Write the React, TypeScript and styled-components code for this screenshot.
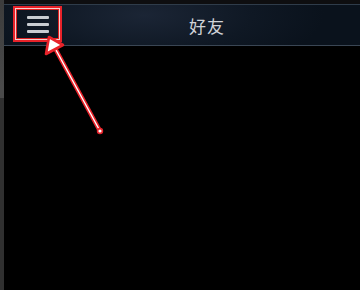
import React from "react";
import styled, { createGlobalStyle } from "styled-components";

const Global = createGlobalStyle`
  html, body { margin: 0; padding: 0; background: #000; }
  body { font-family: "Noto Sans CJK SC", "Noto Sans", sans-serif; }
`;

const Page = styled.div`
  position: relative;
  width: 360px;
  height: 290px;
  display: flex;
  overflow: hidden;
  background: #000;
`;

const SideStrip = styled.div`
  width: 4px;
  flex: none;
  background: linear-gradient(#3c3c3c 0, #4a4a4a 30%, #4a4a4a 98px, #303030 98px, #303030 100%);
`;

const Main = styled.div`
  flex: 1;
  display: flex;
  flex-direction: column;
`;

const TopStrip = styled.div`
  height: 4px;
  background: #0e0e10;
`;

const Header = styled.div`
  height: 40px;
  display: flex;
  align-items: center;
  position: relative;
  border-top: 1px solid #2f3c4a;
  border-bottom: 1px solid #3a4654;
  background: radial-gradient(ellipse 180px 60px at 140px 10px, #1b2535 0%, #0f1824 60%, #0a121c 100%);
`;

const MenuButton = styled.div`
  margin-left: 9px;
  margin-top: -2px;
  width: 45px;
  height: 32px;
  border: 2px solid #e8232a;
  box-shadow: inset 0 0 0 1px #f4d0d0, inset 0 0 0 2px #e02020;
  display: flex;
  flex-direction: column;
  align-items: center;
  justify-content: center;
  gap: 4px;
`;

const Bar = styled.div`
  width: 22px;
  height: 3px;
  border-radius: 1px;
  background: #c9cdd2;
`;

const Title = styled.div`
  position: absolute;
  left: 0;
  right: 0;
  text-align: center;
  padding-left: 50px;
  font-size: 17px;
  color: #d0d3d8;
  letter-spacing: 1px;
  pointer-events: none;
`;

const Content = styled.div`
  flex: 1;
  background: #000;
`;

const Annotation = styled.svg`
  position: absolute;
  left: 0;
  top: 0;
  pointer-events: none;
`;

export default function App() {
  return (
    <Page>
      <Global />
      <SideStrip />
      <Main>
        <TopStrip />
        <Header>
          <MenuButton>
            <Bar />
            <Bar />
            <Bar />
          </MenuButton>
          <Title>好友</Title>
        </Header>
        <Content />
      </Main>
      <Annotation width="360" height="290" viewBox="0 0 360 290">
        <line x1="100" y1="131" x2="56" y2="50" stroke="#e8232a" strokeWidth="4.5" strokeLinecap="round" />
        <line x1="100" y1="131" x2="56" y2="50" stroke="#ffffff" strokeWidth="1.4" strokeLinecap="round" />
        <circle cx="100" cy="131" r="2.4" fill="#fff" stroke="#e8232a" strokeWidth="1.6" />
        <polygon points="49,37 46,54 63,45" fill="#ffffff" stroke="#e8232a" strokeWidth="2.6" strokeLinejoin="round" />
      </Annotation>
    </Page>
  );
}
